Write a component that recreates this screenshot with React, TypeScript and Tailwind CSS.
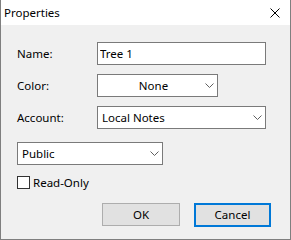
import { useState } from 'react';

const font = { fontFamily: '"Noto Sans", "Liberation Sans", sans-serif' };

function Chevron() {
  return (
    <svg width="9" height="5" viewBox="0 0 9 5" className="shrink-0">
      <path d="M0.5 0.5 L4.5 4.5 L8.5 0.5" fill="none" stroke="#606060" strokeWidth="1" />
    </svg>
  );
}

function Select({ value, width, center }: { value: string; width: string; center?: boolean }) {
  return (
    <div className={`${width} h-[23px] bg-white border border-[#7a7a7a] flex items-center pl-[4px] pr-[3px]`}>
      <span className={`flex-1 ${center ? 'text-center' : ''}`}>{value}</span>
      <Chevron />
    </div>
  );
}

export default function App() {
  const [name, setName] = useState('Tree 1');
  const [readOnly, setReadOnly] = useState(false);

  return (
    <div
      className="w-[291px] h-[240px] flex flex-col border-x border-b border-[#7f7f7f] text-[11.5px] text-black overflow-hidden"
      style={font}
    >
      <div className="h-[25px] bg-white flex items-center justify-between pl-[3px] pr-[10px] shrink-0">
        <span>Properties</span>
        <svg width="10" height="10" viewBox="0 0 10 10">
          <path d="M0.5 0.5 L9.5 9.5 M9.5 0.5 L0.5 9.5" stroke="#000" strokeWidth="1" />
        </svg>
      </div>

      <div className="flex-1 bg-[#f0f0f0] pt-[17px] pl-[16px] pr-[19px] flex flex-col">
        <div className="flex flex-col gap-[9px]">
          <div className="flex items-center">
            <label className="w-[80px]">Name:</label>
            <input
              className="w-[169px] h-[23px] bg-white border border-[#7a7a7a] px-[2px] outline-none"
              value={name}
              onChange={(e) => setName(e.target.value)}
            />
          </div>
          <div className="flex items-center">
            <label className="w-[80px]">Color:</label>
            <Select value="None" width="w-[121px]" center />
          </div>
          <div className="flex items-center">
            <label className="w-[80px]">Account:</label>
            <Select value="Local Notes" width="w-[169px]" />
          </div>
        </div>

        <div className="mt-[13px]">
          <Select value="Public" width="w-[146px]" />
        </div>

        <label className="mt-[11px] h-[13px] flex items-center gap-[3px] w-fit">
          <span
            className="w-[13px] h-[13px] border border-[#333] bg-white"
            onClick={() => setReadOnly(!readOnly)}
          />
          <span>Read-Only</span>
        </label>

        <div className="mt-[14px] flex justify-end gap-[14px]">
          <button className="w-[78px] h-[23px] bg-[#e1e1e1] border border-[#adadad]">OK</button>
          <button className="w-[77px] h-[24px] bg-[#e1e1e1] border-2 border-[#0078d7]">Cancel</button>
        </div>
      </div>
    </div>
  );
}
